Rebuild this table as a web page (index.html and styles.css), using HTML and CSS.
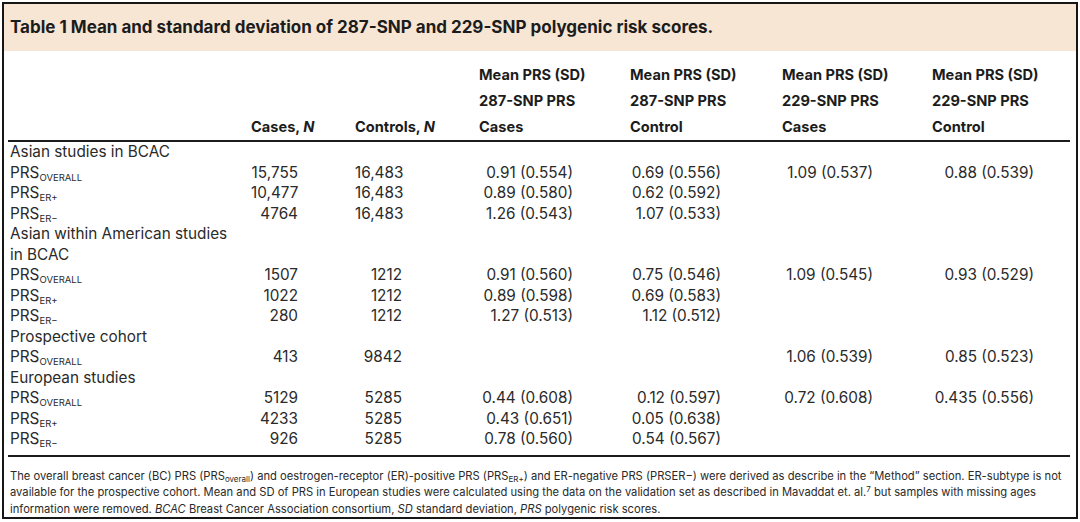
FILE: index.html
```html
<!DOCTYPE html>
<html lang="en">
<head>
<meta charset="utf-8">
<title>Table 1</title>
<link rel="stylesheet" href="styles.css">
</head>
<body>
<div class="frame">
  <div class="caption">Table 1 Mean and standard deviation of 287-SNP and 229-SNP polygenic risk scores.</div>
  <table class="data">
    <colgroup>
      <col class="w1"><col class="w2"><col class="w3"><col class="w4"><col class="w5"><col class="w6"><col class="w7">
    </colgroup>
    <thead>
      <tr>
        <th></th>
        <th>Cases, <i>N</i></th>
        <th>Controls, <i>N</i></th>
        <th>Mean PRS (SD)<br>287-SNP PRS<br>Cases</th>
        <th>Mean PRS (SD)<br>287-SNP PRS<br>Control</th>
        <th>Mean PRS (SD)<br>229-SNP PRS<br>Cases</th>
        <th>Mean PRS (SD)<br>229-SNP PRS<br>Control</th>
      </tr>
    </thead>
    <tbody>
      <tr><td colspan="7">Asian studies in BCAC</td></tr>
      <tr><td>PRS<sub>OVERALL</sub></td><td><span class="n2">15,755</span></td><td><span class="n3">16,483</span></td><td><span class="v4">0.91 (0.554)</span></td><td><span class="v5">0.69 (0.556)</span></td><td><span class="v6">1.09 (0.537)</span></td><td><span class="v7">0.88 (0.539)</span></td></tr>
      <tr><td>PRS<sub>ER+</sub></td><td><span class="n2">10,477</span></td><td><span class="n3">16,483</span></td><td><span class="v4">0.89 (0.580)</span></td><td><span class="v5">0.62 (0.592)</span></td><td></td><td></td></tr>
      <tr><td>PRS<sub>ER−</sub></td><td><span class="n2">4764</span></td><td><span class="n3">16,483</span></td><td><span class="v4">1.26 (0.543)</span></td><td><span class="v5">1.07 (0.533)</span></td><td></td><td></td></tr>
      <tr><td colspan="7">Asian within American studies<br>in BCAC</td></tr>
      <tr><td>PRS<sub>OVERALL</sub></td><td><span class="n2">1507</span></td><td><span class="n3">1212</span></td><td><span class="v4">0.91 (0.560)</span></td><td><span class="v5">0.75 (0.546)</span></td><td><span class="v6">1.09 (0.545)</span></td><td><span class="v7">0.93 (0.529)</span></td></tr>
      <tr><td>PRS<sub>ER+</sub></td><td><span class="n2">1022</span></td><td><span class="n3">1212</span></td><td><span class="v4">0.89 (0.598)</span></td><td><span class="v5">0.69 (0.583)</span></td><td></td><td></td></tr>
      <tr><td>PRS<sub>ER−</sub></td><td><span class="n2">280</span></td><td><span class="n3">1212</span></td><td><span class="v4">1.27 (0.513)</span></td><td><span class="v5">1.12 (0.512)</span></td><td></td><td></td></tr>
      <tr><td colspan="7">Prospective cohort</td></tr>
      <tr><td>PRS<sub>OVERALL</sub></td><td><span class="n2">413</span></td><td><span class="n3">9842</span></td><td></td><td></td><td><span class="v6">1.06 (0.539)</span></td><td><span class="v7">0.85 (0.523)</span></td></tr>
      <tr><td colspan="7">European studies</td></tr>
      <tr><td>PRS<sub>OVERALL</sub></td><td><span class="n2">5129</span></td><td><span class="n3">5285</span></td><td><span class="v4">0.44 (0.608)</span></td><td><span class="v5">0.12 (0.597)</span></td><td><span class="v6">0.72 (0.608)</span></td><td><span class="v7">0.435 (0.556)</span></td></tr>
      <tr><td>PRS<sub>ER+</sub></td><td><span class="n2">4233</span></td><td><span class="n3">5285</span></td><td><span class="v4">0.43 (0.651)</span></td><td><span class="v5">0.05 (0.638)</span></td><td></td><td></td></tr>
      <tr><td>PRS<sub>ER−</sub></td><td><span class="n2">926</span></td><td><span class="n3">5285</span></td><td><span class="v4">0.78 (0.560)</span></td><td><span class="v5">0.54 (0.567)</span></td><td></td><td></td></tr>
    </tbody>
  </table>
  <div class="note">
    The overall breast cancer (BC) PRS (PRS<sub class="lc">overall</sub>) and oestrogen-receptor (ER)-positive PRS (PRS<sub>ER+</sub>) and ER-negative PRS (PRSER−) were derived as describe in the “Method” section. ER-subtype is not<br>
    available for the prospective cohort. Mean and SD of PRS in European studies were calculated using the data on the validation set as described in Mavaddat et. al.<sup>7</sup> but samples with missing ages<br>
    information were removed. <i>BCAC</i> Breast Cancer Association consortium, <i>SD</i> standard deviation, <i>PRS</i> polygenic risk scores.
  </div>
</div>
</body>
</html>
```

FILE: styles.css
```css
html, body {
  margin: 0;
  padding: 0;
  background: #ffffff;
}

body {
  padding: 2px 0 0 2px;
  font-family: Inter, "Open Sans", "Liberation Sans", sans-serif;
  color: #2a2a2a;
}

.frame {
  box-sizing: border-box;
  width: 1076px;
  border: 2px solid #161616;
  background: #ffffff;
}

.caption {
  height: 47px;
  line-height: 47px;
  padding-left: 6px;
  background: #f7e6d3;
  font-size: 17px;
  font-weight: 700;
  color: #1c1c1c;
  white-space: nowrap;
}

.data {
  width: 1062px;
  margin: 11px 0 0 4px;
  border-collapse: collapse;
  border-spacing: 0;
  table-layout: fixed;
  font-size: 15.3px;
}

.w1 { width: 241px; }
.w2 { width: 104px; }
.w3 { width: 124px; }
.w4 { width: 151px; }
.w5 { width: 152px; }
.w6 { width: 150px; }
.w7 { width: 140px; }

.data th {
  padding: 0 0 0 2px;
  text-align: left;
  vertical-align: bottom;
  font-size: 14.6px;
  font-weight: 700;
  line-height: 26px;
  color: #1c1c1c;
  white-space: nowrap;
  border-bottom: 2px solid #1c1c1c;
}

.data th i {
  font-style: italic;
}

.data td {
  padding: 0 0 0 2px;
  line-height: 20.5px;
  white-space: nowrap;
  vertical-align: top;
}

.data tbody tr:last-child td {
  padding-bottom: 5px;
  border-bottom: 2px solid #1c1c1c;
}

sub {
  font-size: 9.5px;
  vertical-align: -3px;
  line-height: 0;
}

.n2, .n3, .v4, .v5, .v6, .v7 {
  display: inline-block;
  text-align: right;
}

.n2 { width: 47px; }
.n3 { width: 47px; }
.v4 { width: 94px; }
.v5 { width: 91px; }
.v6 { width: 91px; }
.v7 { width: 102px; }

.note {
  margin: 0 0 0 4px;
  padding: 11px 0 0 2px;
  font-size: 11.2px;
  line-height: 16.5px;
  color: #2a2a2a;
  white-space: nowrap;
}

.note sub {
  font-size: 8px;
  vertical-align: -2px;
}

.note sup {
  font-size: 8px;
  vertical-align: 4px;
  line-height: 0;
}
```
